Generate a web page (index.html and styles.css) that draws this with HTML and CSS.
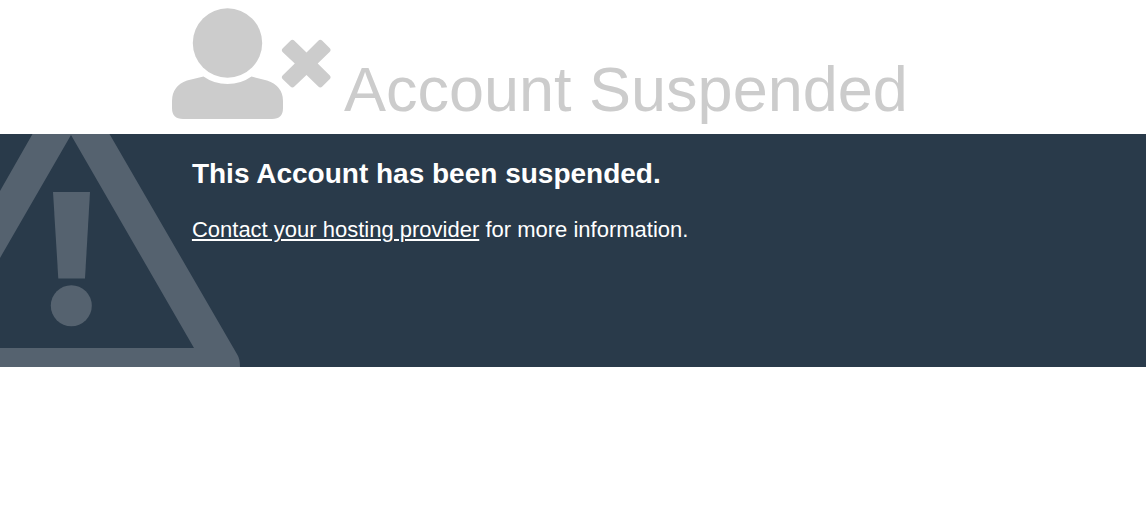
FILE: index.html
```
<!DOCTYPE html>
<html lang="en">
<head>
<meta charset="utf-8">
<meta name="viewport" content="width=device-width, initial-scale=1">
<title>Account Suspended</title>
<link rel="stylesheet" href="styles.css">
</head>
<body>
<header class="masthead container">
  <svg class="user-icon" viewBox="0 0 159 111" aria-hidden="true">
    <circle cx="55.500" cy="35" r="34.700"/>
    <path d="M31.500 68.500Q42 76 55.500 76T79.500 68.500L95 72.500Q111 78 111 93V100Q111 111 100 111H11Q0 111 0 100V93Q0 78 15 72.500Z"/>
    <path d="M110.800 40.300L118.400 32.700Q120.400 30.900 122.400 32.700L134.500 44.500L146.300 32.700Q148.300 30.900 150.300 32.700L157.600 40Q159.600 42 157.600 44L145.700 55.500L157.600 67.300Q159.600 69.300 157.600 71.300L150.300 78.600Q148.300 80.600 146.300 78.600L134.500 67L122.400 78.600Q120.400 80.600 118.400 78.600L110.800 71.300Q108.800 69.300 110.800 67.300L122.800 55.500L110.800 44.300Q108.800 42.300 110.800 40.300Z"/>
  </svg>
  <h1 class="title">Account Suspended</h1>
</header>
<main class="notice">
  <svg class="warning" viewBox="0 0 240 233" aria-hidden="true">
    <path fill-rule="evenodd" d="M32.500 0H109.500L237.500 221Q240 225 240 233H-98V221L0 57ZM71 1L-52 214H194Z"/>
    <path d="M53 58H90L85 144.500H58.300Z"/>
    <circle cx="71.300" cy="171.700" r="20.500"/>
  </svg>
  <div class="message container">
    <h2 class="heading">This Account has been suspended.</h2>
    <p class="details"><a class="link" href="#">Contact your hosting provider</a> for more information.</p>
  </div>
</main>
</body>
</html>
```
FILE: styles.css
```
body {
  margin: 0;
  background: #fff;
  font-family: Arial, "Liberation Sans", sans-serif;
}

.container {
  width: 70%;
  margin: 0 auto;
}

.masthead {
  display: flex;
  align-items: flex-end;
  gap: 13px;
  padding: 8px 0 15px;
  color: #ccc;
}

.user-icon {
  flex: none;
  width: 159px;
  height: 111px;
  fill: currentColor;
}

.title {
  margin: 0;
  font-size: 63px;
  line-height: 60px;
  font-weight: 400;
  white-space: nowrap;
}

.notice {
  position: relative;
  overflow: hidden;
  min-height: 233px;
  background: #293a4a;
  color: #fff;
}

.warning {
  position: absolute;
  top: 0;
  left: 0;
  width: 240px;
  height: 233px;
  fill: #55626f;
}

.message {
  position: relative;
  box-sizing: border-box;
  padding: 24px 20px;
}

.heading {
  margin: 0 0 24px;
  font-size: 28px;
  line-height: 32px;
}

.details {
  margin: 0;
  font-size: 22px;
  line-height: 32px;
}

.link {
  color: inherit;
}
```
